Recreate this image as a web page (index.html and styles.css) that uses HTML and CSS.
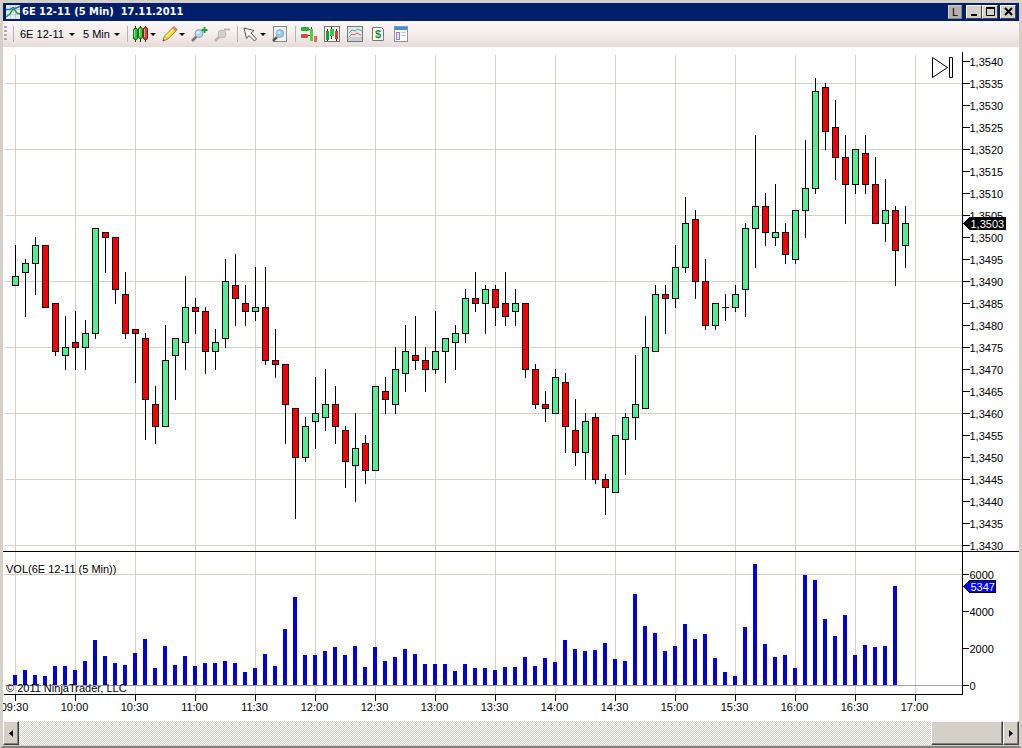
FILE: index.html
```html
<!DOCTYPE html>
<html lang="en">

<head>
    <meta charset="UTF-8">
    <meta name="viewport" content="width=device-width, initial-scale=1.0">
    <title>6E 12-11 (5 Min)</title>
    <link rel="stylesheet" href="styles.css">
</head>

<body>
    <div class="window">
        <header class="titlebar">
            <svg class="app-icon" width="14" height="14" viewBox="0 0 14 14">
                <rect width="14" height="14" fill="#dfe9f2" />
                <path d="M4.5 0v14M9.5 0v14M0 4.5h14M0 9.5h14" stroke="#c3d0dc" />
                <path d="M0 4.500h4l3-2 2 1 5-2" fill="none" stroke="#2d6fb5" stroke-width="1.500" />
                <path d="M0 12l4-3 3-5 2 1 2 3 3 1" fill="none" stroke="#2c9a4b" stroke-width="1.500" />
            </svg>
            <h1 class="title">6E 12-11 (5 Min)&nbsp; 17.11.2011</h1>
            <button class="win-btn link-btn" aria-label="Link">L</button>
            <div class="win-btns">
                <button class="win-btn" aria-label="Minimize"><svg width="11" height="10"><path d="M2 8h6" stroke="#000" stroke-width="2" /></svg></button>
                <button class="win-btn" aria-label="Maximize"><svg width="11" height="10"><path d="M1.5 1v7.500h8V1M1 1.500h9" fill="none" stroke="#000" /><path d="M1 1h9" stroke="#000" stroke-width="2" /></svg></button>
            </div>
            <button class="win-btn" aria-label="Close"><svg width="11" height="10"><path d="M2 1l7 7M9 1l-7 7" stroke="#000" stroke-width="2" /></svg></button>
        </header>

        <nav class="toolbar">
            <span class="grip"></span>
            <span class="sep"></span>
            <label class="drop symbol"><select aria-label="Instrument"><option>6E 12-11</option></select></label>
            <label class="drop period"><select aria-label="Period"><option>5 Min</option></select></label>
            <span class="sep"></span>
            <button class="tool split" aria-label="Chart style">
                <svg width="16" height="16" viewBox="0 0 16 16">
                    <path d="M2.500 0v16M7.500 0v16M12.500 0v16" stroke="#333" />
                    <rect x=".5" y="2.500" width="4" height="11" rx="1.500" fill="#35c135" stroke="#14701b" />
                    <rect x="5.500" y="1.500" width="4" height="11" rx="1.500" fill="#35d43a" stroke="#14701b" />
                    <rect x="10.500" y="1.500" width="4" height="12" rx="1.500" fill="#e8393b" stroke="#8f1717" />
                    <path d="M1.500 4v7M6.500 3v7M11.500 3v8" stroke="#fff" stroke-opacity=".5" />
                </svg>
            </button>
            <button class="tool split" aria-label="Drawing tools">
                <svg width="16" height="16" viewBox="0 0 16 16">
                    <path d="M1 15l1.500-5L11 1.500l3.500 3L6 13z" fill="#f9cf3a" stroke="#c18a1c" />
                    <path d="M4 11l8-8" stroke="#fff08c" stroke-width="1.500" />
                    <path d="M10.500 2l1.500-1.500 3.500 3L14 5z" fill="#ee8170" stroke="#c66a50" stroke-width=".6" />
                    <path d="M1 15l1.300-4.500L5.500 13z" fill="#f5ddb4" stroke="#a9834a" stroke-width=".6" />
                    <path d="M1 15l.6-2 1.400 1.300z" fill="#333" />
                </svg>
            </button>
            <button class="tool" aria-label="Zoom in">
                <svg width="17" height="16" viewBox="0 0 17 16">
                    <path d="M1 15l5-5" stroke="#777" stroke-width="2.500" />
                    <circle cx="8" cy="7.500" r="4" fill="#aed8f6" stroke="#8aa5bb" />
                    <circle cx="7" cy="6.500" r="1.500" fill="#e4f4ff" />
                    <path d="M13.500 1v6M10.500 4h6" stroke="#18a52a" stroke-width="2" />
                </svg>
            </button>
            <button class="tool" aria-label="Zoom out" disabled>
                <svg width="17" height="16" viewBox="0 0 17 16">
                    <path d="M1 15l5-5" stroke="#bbb5b3" stroke-width="2.500" />
                    <circle cx="8" cy="8" r="4" fill="#d3cecc" stroke="#c0bab8" />
                    <path d="M10 3.500h6" stroke="#bbb5b3" stroke-width="2" />
                </svg>
            </button>
            <span class="sep"></span>
            <button class="tool split" aria-label="Cursor">
                <svg width="16" height="16" viewBox="0 0 16 16">
                    <path d="M1 2l10 2.500-3 2.500 5.500 6-2 2L6 9.500l-2.500 3z" fill="#fff" stroke="#555" />
                </svg>
            </button>
            <button class="tool" aria-label="Data box">
                <svg width="17" height="16" viewBox="0 0 17 16">
                    <rect x="1.500" y=".5" width="13" height="15" fill="#f1f4f7" stroke="#8a8a8a" />
                    <path d="M1 15l4-4" stroke="#555" stroke-width="2.500" />
                    <circle cx="8" cy="7.500" r="4" fill="#8fc9f3" stroke="#9ab0c2" />
                    <circle cx="7" cy="6.500" r="1.500" fill="#d8effd" />
                </svg>
            </button>
            <span class="sep"></span>
            <button class="tool" aria-label="Chart trader">
                <svg width="17" height="16" viewBox="0 0 17 16">
                    <path d="M6 3.500h5M6 9.500h5M10.500 1v14" stroke="#444" />
                    <rect y="1" width="8" height="4" rx="1" fill="#28b437" />
                    <rect y="8" width="7" height="4" rx="1" fill="#d94646" />
                    <rect x="9" y="3" width="3" height="12" fill="#4ed23f" />
                    <rect x="13" y="10" width="3" height="6" fill="#ee6464" />
                </svg>
            </button>
            <button class="tool" aria-label="Data series">
                <svg width="17" height="16" viewBox="0 0 17 16">
                    <rect x=".5" y=".5" width="15" height="15" fill="#f4f4f4" stroke="#777" />
                    <path d="M3.500 3v12M7.500 1v12M12.500 3v12" stroke="#222" />
                    <rect x="2" y="5" width="3" height="9" fill="#1f9c31" />
                    <rect x="6" y="3" width="4" height="7" fill="#35c93d" />
                    <rect x="11" y="5" width="3" height="8" fill="#d63c3c" />
                </svg>
            </button>
            <button class="tool" aria-label="Indicators">
                <svg width="17" height="16" viewBox="0 0 17 16">
                    <rect x=".5" y=".5" width="15" height="15" fill="#e5e8ea" stroke="#777" />
                    <path d="M1 11h14v4H1z" fill="#c9ced2" />
                    <path d="M2 7l3-3 3 1 3-2 4 2" fill="none" stroke="#48ad8f" />
                    <path d="M2 11l3-3 2 1 3-2 4 2" fill="none" stroke="#e05c5c" />
                </svg>
            </button>
            <button class="tool" aria-label="Strategies">
                <svg width="17" height="16" viewBox="0 0 17 16">
                    <path d="M2.500 1.500h9l2 2v11h-11z" fill="#fff" stroke="#777" />
                    <text class="dollar" x="8" y="12">$</text>
                </svg>
            </button>
            <button class="tool" aria-label="Properties">
                <svg width="17" height="16" viewBox="0 0 17 16">
                    <rect x="1.500" y=".5" width="13" height="15" fill="#fff" stroke="#8795ad" />
                    <rect x="2" y="1" width="12" height="3" fill="#4a8ae0" />
                    <rect x="3.500" y="6.500" width="3" height="7" fill="#eadcfb" stroke="#9a7ad6" />
                    <path d="M8 6.500h5M8 9.500h5" stroke="#bfc9dc" />
                </svg>
            </button>
        </nav>

        <main class="chart-wrap">
            <svg id="chart" class="chart" role="img" aria-label="6E 12-11 price and volume"></svg>
            <button class="goto-end" aria-label="Go to last bar">
                <svg width="22" height="22"><path d="M.5.5l15 10-15 10zM17.500.5h3v20h-3z" fill="#fff" stroke="#000" /></svg>
            </button>
        </main>

        <div class="scrollbar">
            <button class="scroll-btn" aria-label="Scroll left"><svg width="4" height="7"><path d="M4 0v7L0 3.500z" /></svg></button>
            <div class="track"><div class="thumb"></div></div>
            <button class="scroll-btn" aria-label="Scroll right"><svg width="4" height="7"><path d="M0 0v7l4-3.500z" /></svg></button>
        </div>
    </div>

    <script src="chart.js"></script>
</body>

</html>
```

FILE: styles.css
```css
* {
    margin: 0;
    padding: 0;
    box-sizing: border-box;
}

body {
    font-family: "Liberation Sans", Arial, sans-serif;
    font-size: 11px;
    color: #000;
}

button {
    font: inherit;
    border: none;
    background: none;
}

svg {
    display: block;
}

.window {
    display: flex;
    flex-direction: column;
    height: 100vh;
    border: 3px solid #d4d0c8;
    border-bottom: 2px solid #808080;
    background: #fff;
}

.titlebar {
    display: flex;
    align-items: center;
    height: 18px;
    flex: none;
    padding: 0 3px;
    background: #001f6b;
}

.title {
    flex: 1;
    margin-left: 2px;
    font-family: "DejaVu Sans Condensed", Tahoma, sans-serif;
    font-size: 11px;
    line-height: 18px;
    color: #fff;
    white-space: nowrap;
}

.win-btns {
    display: flex;
    margin: 0 2px 0 4px;
}

.win-btn {
    display: flex;
    align-items: center;
    justify-content: center;
    width: 16px;
    height: 14px;
    background: #d4d0c8;
    border: 1px solid;
    border-color: #fff #404040 #404040 #fff;
}

.link-btn {
    width: 14px;
    background: #b5afad;
    border-color: #d4d0c8 #8a8482 #8a8482 #d4d0c8;
}

/* toolbar */
.toolbar {
    display: flex;
    align-items: center;
    gap: 6px;
    height: 26px;
    flex: none;
    padding-left: 1px;
    background: linear-gradient(#fcf8f8, #f4eeed 50%, #e6dbd9);
}

.grip {
    width: 3px;
    height: 16px;
    background: repeating-linear-gradient(#b3aba9 0 2px, transparent 2px 4px);
}

.sep {
    width: 1px;
    height: 16px;
    margin-right: -1px;
    background: #b9b1af;
}

.drop {
    position: relative;
}

.drop select {
    width: 100%;
    height: 20px;
    padding-left: 1px;
    font: inherit;
    color: #000;
    border: none;
    background: none;
    appearance: none;
}

.symbol {
    width: 57px;
}

.period {
    width: 39px;
}

.drop::after,
.split::after {
    content: "";
    border: 3px solid transparent;
    border-top-color: #000;
    border-bottom: none;
}

.drop::after {
    position: absolute;
    right: 1px;
    top: 9px;
}

.tool {
    display: flex;
    align-items: center;
}

.split::after {
    margin-left: 1px;
}

.dollar {
    font-size: 11px;
    font-weight: bold;
    fill: #159227;
    text-anchor: middle;
}

/* chart */
.chart-wrap {
    position: relative;
    flex: 1;
    min-height: 0;
}

.chart {
    width: 100%;
    height: 100%;
    shape-rendering: crispEdges;
}

.chart text {
    font-size: 11px;
}

.grid {
    stroke: #d4d0c8;
}

.zero {
    stroke: #a0a0a8;
}

.axis {
    stroke: #000;
}

.wick {
    stroke: #000;
}

.up {
    fill: #4eee94;
    stroke: #000;
}

.down {
    fill: #f80000;
    stroke: #000;
}

.volume {
    fill: #0000dc;
}

.time {
    text-anchor: middle;
}

.tag-price {
    fill: #000;
    stroke: #000;
}

.tag-volume {
    fill: #0000ff;
    stroke: #000;
}

.chart .tag-text {
    fill: #fff;
}

.goto-end {
    position: absolute;
    top: 10px;
    right: 65px;
}

/* scrollbar */
.scrollbar {
    display: flex;
    flex: none;
    height: 25px;
    border-bottom: 1px solid #d4d0c8;
}

.scroll-btn,
.thumb {
    background: #d4d0c8;
    border: 1px solid;
    border-color: #fff #404040 #404040 #fff;
    box-shadow: inset -1px -1px #808080;
}

.scroll-btn {
    display: flex;
    align-items: center;
    justify-content: center;
    width: 16px;
}

.track {
    display: flex;
    justify-content: flex-end;
    flex: 1;
    background: repeating-conic-gradient(#d4d0c8 0 25%, #fff 0 50%) 0 0 / 2px 2px;
}

.thumb {
    width: 72px;
}
```

FILE: chart.js
```javascript
// [high, body top, body bottom, low, up, volume], prices without the leading "1,"
var bars = [
    [3498, 3491, 3489, 3489, 1, 540], [3495, 3494, 3492, 3482, 1, 810], [3500, 3498, 3494, 3487, 1, 540],
    [3498, 3498, 3484, 3484, 0, 490], [3485, 3485, 3474, 3473, 0, 1030], [3482, 3475, 3473, 3470, 1, 1030],
    [3483, 3476, 3475, 3470, 0, 810], [3481, 3478, 3475, 3470, 1, 1300], [3502, 3502, 3478, 3477, 1, 2430],
    [3501, 3501, 3500, 3492, 0, 1570], [3500, 3500, 3488, 3485, 0, 1190], [3492, 3487, 3478, 3477, 0, 1080],
    [3479, 3479, 3478, 3467, 0, 1730], [3478, 3477, 3463, 3454, 0, 2490], [3466, 3462, 3457, 3453, 0, 920],
    [3480, 3472, 3457, 3457, 1, 2110], [3477, 3477, 3473, 3463, 1, 1080], [3491, 3484, 3476, 3470, 1, 1570],
    [3486, 3484, 3483, 3478, 0, 1030], [3484, 3483, 3474, 3469, 0, 1190], [3479, 3476, 3474, 3470, 1, 1190],
    [3495, 3490, 3477, 3475, 1, 1300], [3496, 3489, 3486, 3480, 0, 1190], [3489, 3485, 3483, 3480, 0, 700],
    [3493, 3484, 3483, 3481, 1, 920], [3493, 3484, 3472, 3471, 0, 1680], [3479, 3472, 3471, 3468, 0, 1030],
    [3471, 3471, 3462, 3453, 0, 3030], [3461, 3461, 3450, 3436, 0, 4760], [3459, 3457, 3450, 3449, 1, 1620],
    [3468, 3460, 3458, 3452, 1, 1620], [3470, 3462, 3459, 3456, 1, 1840], [3466, 3462, 3457, 3453, 0, 2050],
    [3457, 3456, 3449, 3443, 0, 1620], [3460, 3452, 3448, 3440, 1, 2110], [3455, 3453, 3447, 3444, 0, 970],
    [3466, 3466, 3447, 3447, 1, 2050], [3468, 3465, 3463, 3460, 0, 1300], [3475, 3470, 3462, 3460, 1, 1510],
    [3480, 3474, 3469, 3465, 1, 1950], [3482, 3473, 3472, 3470, 0, 1680], [3475, 3472, 3470, 3465, 0, 1130],
    [3483, 3474, 3470, 3469, 1, 1130], [3477, 3477, 3474, 3467, 1, 1130], [3480, 3478, 3476, 3470, 1, 760],
    [3488, 3486, 3478, 3476, 1, 1130], [3492, 3486, 3485, 3483, 0, 920], [3489, 3488, 3485, 3478, 1, 920],
    [3489, 3488, 3484, 3480, 0, 810], [3492, 3485, 3482, 3480, 0, 970], [3488, 3485, 3483, 3480, 1, 970],
    [3485, 3485, 3470, 3468, 0, 1510], [3471, 3470, 3462, 3461, 0, 1030], [3465, 3462, 3461, 3458, 0, 1460],
    [3470, 3468, 3460, 3460, 1, 1240], [3469, 3467, 3457, 3451, 0, 2430], [3463, 3456, 3451, 3448, 0, 1950],
    [3460, 3458, 3451, 3445, 1, 1840], [3460, 3459, 3445, 3444, 0, 1890], [3446, 3445, 3443, 3437, 0, 2270],
    [3455, 3455, 3442, 3442, 1, 1410], [3460, 3459, 3454, 3446, 1, 1300], [3473, 3462, 3459, 3454, 1, 4920],
    [3482, 3475, 3461, 3461, 1, 3190], [3489, 3487, 3474, 3474, 1, 2810], [3489, 3487, 3486, 3478, 0, 1840],
    [3498, 3493, 3486, 3484, 1, 2110], [3509, 3503, 3493, 3492, 1, 3300], [3506, 3504, 3490, 3486, 0, 2490],
    [3495, 3490, 3480, 3479, 0, 2760], [3485, 3485, 3480, 3479, 1, 1460], [3487, 3484, 3484, 3481, 1, 700],
    [3489, 3487, 3484, 3483, 1, 490], [3503, 3502, 3488, 3482, 1, 3130], [3523, 3507, 3502, 3493, 1, 6540],
    [3510, 3507, 3501, 3498, 0, 2220], [3512, 3501, 3500, 3498, 1, 1510], [3503, 3501, 3496, 3494, 0, 1620],
    [3506, 3506, 3495, 3494, 1, 920], [3522, 3511, 3506, 3500, 1, 5950], [3536, 3533, 3511, 3510, 1, 5680],
    [3535, 3534, 3524, 3520, 0, 3570], [3531, 3525, 3518, 3513, 0, 2650], [3523, 3518, 3512, 3503, 0, 3780],
    [3520, 3520, 3512, 3510, 1, 1620], [3523, 3519, 3512, 3510, 0, 2160], [3518, 3512, 3503, 3503, 0, 2050],
    [3513, 3506, 3503, 3499, 1, 2110], [3507, 3506, 3497, 3489, 0, 5347], [3507, 3503, 3498, 3493, 1, 0]
];

var chart = document.getElementById("chart");

function add(name, attrs, text) {
    var el = document.createElementNS("http://www.w3.org/2000/svg", name);
    for (var k in attrs) {
        el.setAttribute(k, attrs[k]);
    }
    if (text) {
        el.textContent = text;
    }
    chart.appendChild(el);
}

function line(x1, y1, x2, y2, cls) {
    add("path", { d: "M" + x1 + " " + y1 + "L" + x2 + " " + y2, "class": cls });
}

function label(x, y, text, cls) {
    add("text", { x: x, y: y, "class": cls || "" }, text);
}

function tag(x, y, w, text, cls) {
    add("path", { d: "M" + (x + 1) + " " + y + "l6 -6h" + w + "v12h-" + w + "z", "class": cls });
    label(x + 8, y + 4, text, "tag-text");
}

function draw() {
    chart.innerHTML = "";
    var w = chart.clientWidth;
    var h = chart.clientHeight;
    var axisX = w - 57 + 0.5;
    var splitY = h - 170 + 0.5;
    var bottomY = h - 27 + 0.5;
    var tick = (splitY - 20.5) / 110;
    var i, x, y;

    function priceY(p) {
        return 14.5 + Math.floor((3540 - p) * tick + 0.01);
    }

    function volumeY(v) {
        return h - 36 + 0.5 - Math.round(v * 37 / 2000);
    }

    // grid
    for (i = 0; 12 + i * 60 < w - 57; i++) {
        x = 12.5 + i * 60;
        line(x, 8, x, bottomY, "grid");
        line(x, bottomY, x, bottomY + 6, "axis");
        var min = 570 + i * 30;
        label(x - 1, bottomY + 16, ("0" + Math.floor(min / 60)).slice(-2) + ":" + ("0" + min % 60).slice(-2), "time");
    }
    for (i = 3535; i >= 3430; i -= 15) {
        line(2, priceY(i), axisX, priceY(i), "grid");
    }
    line(2, volumeY(6000), axisX, volumeY(6000), "grid");
    line(2, volumeY(0), axisX, volumeY(0), "zero");

    // bars
    bars.forEach(function(b, n) {
        var x = 12.5 + n * 10;
        var top = priceY(b[1]);
        var bottom = priceY(b[2]);
        line(x, priceY(b[0]) - 0.5, x, priceY(b[3]) + 0.5, "wick");
        if (top == bottom) {
            line(x - 3.5, top, x + 3.5, top, "wick");
        } else {
            add("rect", { x: x - 3, y: top, width: 6, height: bottom - top, "class": b[4] ? "up" : "down" });
        }
        y = volumeY(b[5]) - 0.5;
        add("rect", { x: x - 2.5, y: y, width: 4, height: h - 36 - y, "class": "volume" });
    });

    // axes
    line(axisX, 5, axisX, bottomY + 0.5, "axis");
    line(1, bottomY, axisX, bottomY, "axis");
    line(0, splitY, w, splitY, "axis");
    for (i = 3540; i >= 3430; i -= 5) {
        line(axisX, priceY(i), axisX + 7, priceY(i), "axis");
        label(axisX + 7, priceY(i) + 4, "1," + i);
    }
    for (i = 0; i <= 6000; i += 2000) {
        line(axisX, volumeY(i), axisX + 6, volumeY(i), "axis");
        label(axisX + 7, volumeY(i) + 4, String(i));
    }
    tag(axisX, priceY(3503), 36, "1,3503", "tag-price");
    tag(axisX, volumeY(5347), 26, "5347", "tag-volume");

    label(3, splitY + 21, "VOL(6E 12-11 (5 Min))");
    label(3, bottomY - 3, "© 2011 NinjaTrader, LLC");
}

draw();
window.onresize = draw;
```
